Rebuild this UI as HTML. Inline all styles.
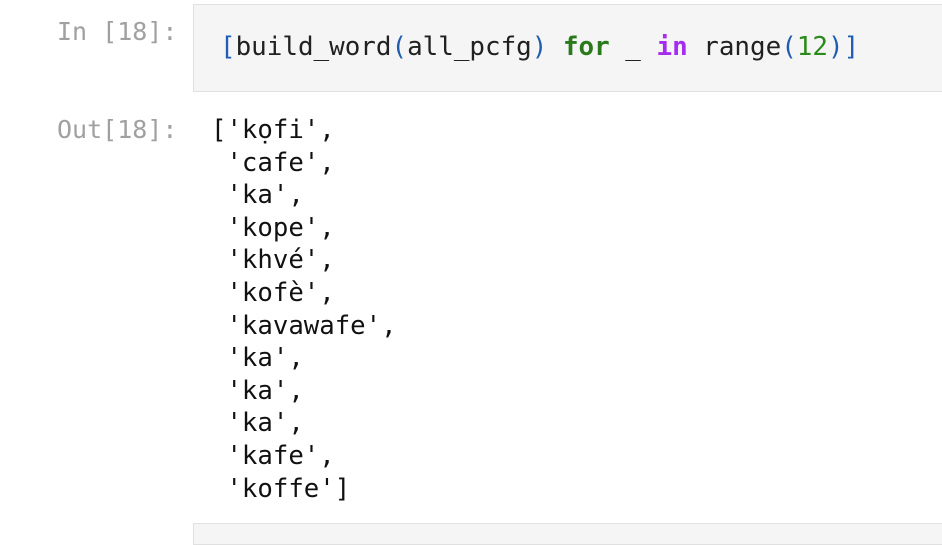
<!DOCTYPE html>
<html><head><style>
body{margin:0;width:942px;height:528px;background:#fff;overflow:hidden;position:relative;font-family:"DejaVu Sans Mono","Liberation Mono",monospace;}
.p{position:absolute;color:#a0a0a0;font-size:25px;white-space:pre;}
.box{position:absolute;left:193px;top:4px;width:760px;height:86px;background:#f5f5f5;border:1px solid #e0e0e0;}
.code{position:absolute;left:220px;top:31px;font-size:25.9px;white-space:pre;color:#212121;line-height:32px;}
.out{position:absolute;left:211px;top:114px;font-size:25.7px;white-space:pre;color:#111;line-height:32.6px;}
.b{color:#1f5db0}.k{color:#2a7a1b;font-weight:bold}.i{color:#a62cf0;font-weight:bold}.n{color:#2a8a1b}
.box2{position:absolute;left:193px;top:523px;width:760px;height:20px;background:#f5f5f5;border:1px solid #e0e0e0;}
</style></head><body>
<div class="p" style="left:57px;top:17px">In [18]:</div>
<div class="box"></div>
<div class="code"><span class="b">[</span>build_word<span class="b">(</span>all_pcfg<span class="b">)</span> <span class="k">for</span> _ <span class="i">in</span> range<span class="b">(</span><span class="n">12</span><span class="b">)]</span></div>
<div class="p" style="left:57px;top:114px;line-height:32.6px">Out[18]:</div>
<div class="out">['kọfi',
 'cafe',
 'ka',
 'kope',
 'khvé',
 'kofè',
 'kavawafe',
 'ka',
 'ka',
 'ka',
 'kafe',
 'koffe']</div>
<div class="box2"></div>
</body></html>
